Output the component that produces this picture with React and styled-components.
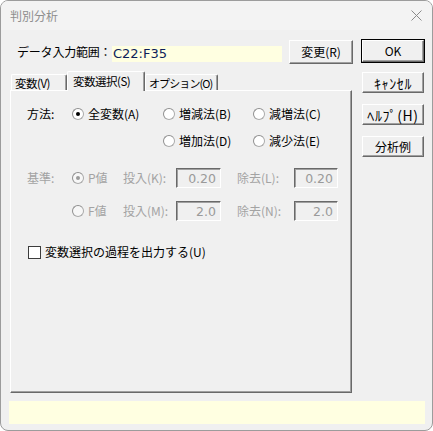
import styled, { createGlobalStyle } from "styled-components";

const face = "#f0f0f0";
const dark = "#696969";
const shadow = "#a0a0a0";
const disabledText = "#a3a3a3";

const GlobalStyle = createGlobalStyle`
  html, body { margin: 0; padding: 0; background: #ffffff; }
  * { box-sizing: border-box; }
  body {
    font-family: "Noto Sans CJK JP", "Noto Sans", sans-serif;
    font-size: 12px;
    color: #000;
  }
`;

const Window = styled.div`
  width: 433px;
  height: 431px;
  border: 1px solid #9c9c9c;
  border-radius: 8px;
  background: ${face};
  display: flex;
  flex-direction: column;
  overflow: hidden;
`;

const TitleBar = styled.div`
  height: 29px;
  background: #f3f3f3;
  display: flex;
  align-items: center;
  justify-content: space-between;
  padding: 0 10px 0 9px;
  color: #8e8e8e;
  line-height: 14px;
`;

const Main = styled.div`
  flex: 1;
  display: flex;
  padding: 9px 0 0 9px;
  gap: 9px;
`;

const LeftCol = styled.div`
  width: 342px;
  display: flex;
  flex-direction: column;
`;

const DataRow = styled.div`
  height: 26px;
  display: flex;
  align-items: center;
`;

const DataLabel = styled.span`
  width: 102px;
  padding-left: 7px;
  line-height: 14px;
  white-space: nowrap;
  letter-spacing: -0.2px;
`;

const RangeField = styled.div`
  width: 170px;
  height: 16px;
  margin-top: 3px;
  background: #ffffe1;
  color: #0e1e5a;
  font-family: "DejaVu Sans", sans-serif;
  font-size: 13px;
  line-height: 16px;
  padding-left: 1px;
`;

const Button = styled.button`
  width: ${p => p.w || 62}px;
  height: ${p => p.h || 21}px;
  margin: 0;
  padding: 0;
  background: ${face};
  border-top: 1px solid #fff;
  border-left: 1px solid #fff;
  border-right: 1px solid ${dark};
  border-bottom: 1px solid ${dark};
  box-shadow: inset -1px -1px 0 ${shadow};
  font-family: inherit;
  font-size: ${p => (p.kana ? 14 : 12)}px;
  letter-spacing: ${p => (p.kana ? 0.6 : 0)}px;
  line-height: 14px;
  color: #000;
  white-space: nowrap;
  display: flex;
  align-items: center;
  justify-content: center;
`;

const ChangeButton = styled(Button)`
  margin-left: auto;
  margin-right: -1px;
`;

const DefaultFrame = styled.div`
  width: 64px;
  height: 24px;
  border: 1px solid #000;
  display: flex;
`;

const RightCol = styled.div`
  display: flex;
  flex-direction: column;
  align-items: flex-start;
  & > button { margin-left: 1px; margin-top: 11px; }
  & > button:first-of-type { margin-top: 9px; }
`;

const TabStrip = styled.div`
  margin-top: 6px;
  height: 19px;
  display: flex;
  align-items: flex-end;
  padding-left: 1px;
  position: relative;
  z-index: 1;
`;

const Tab = styled.div`
  width: ${p => p.w}px;
  height: ${p => (p.active ? 20 : 16)}px;
  margin-bottom: ${p => (p.active ? -1 : 0)}px;
  background: ${face};
  border-top: 1px solid #fff;
  border-left: 1px solid #fff;
  border-right: 1px solid ${dark};
  box-shadow: inset -1px 0 0 ${shadow};
  border-radius: 2px 2px 0 0;
  display: flex;
  align-items: ${p => (p.active ? "flex-start" : "center")};
  padding-top: ${p => (p.active ? 2 : 0)}px;
  padding-left: ${p => (p.active ? 5 : 3)}px;
  font-size: ${p => (p.narrow ? 11 : 11.5)}px;
  letter-spacing: ${p => (p.narrow ? -0.9 : -0.5)}px;
  line-height: 14px;
  white-space: nowrap;
  overflow: hidden;
`;

const Panel = styled.div`
  width: 342px;
  height: 303px;
  border-top: 1px solid #fff;
  border-left: 1px solid #fff;
  border-right: 1px solid ${dark};
  border-bottom: 1px solid ${dark};
  box-shadow: inset -1px -1px 0 ${shadow};
  padding: 13px 0 0 16px;
  display: flex;
  flex-direction: column;
`;

const Row = styled.div`
  height: 20px;
  display: flex;
  align-items: center;
  margin-top: ${p => p.gap || 0}px;
  color: ${p => (p.disabled ? disabledText : "#000")};
`;

const Cell = styled.div`
  width: ${p => p.w}px;
  margin-left: ${p => p.ml || 0}px;
  flex: none;
  display: flex;
  align-items: center;
  line-height: 14px;
  white-space: nowrap;
`;

const RadioDot = styled.span`
  width: 12px;
  height: 12px;
  border-radius: 50%;
  border: 1px solid #ababab;
  border-top-color: #8f8f8f;
  border-left-color: #8f8f8f;
  background: ${p => (p.disabled ? "#f7f7f7" : "#fff")};
  margin-right: 4px;
  display: flex;
  align-items: center;
  justify-content: center;
  flex: none;
  &::after {
    content: "";
    width: 4px;
    height: 4px;
    border-radius: 50%;
    background: ${p => (p.checked ? (p.disabled ? "#9a9a9a" : "#000") : "transparent")};
  }
`;

const EditBox = styled.div`
  width: ${p => p.w}px;
  height: 20px;
  border-top: 1px solid ${dark};
  border-left: 1px solid ${dark};
  border-right: 1px solid #fff;
  border-bottom: 1px solid #fff;
  box-shadow: inset 1px 1px 0 ${shadow};
  background: ${face};
  color: #9a9a9a;
  font-family: "DejaVu Sans", sans-serif;
  font-size: 12.5px;
  display: flex;
  align-items: center;
  justify-content: flex-end;
  padding-right: 4px;
  flex: none;
`;

const CheckBox = styled.span`
  width: 13px;
  height: 13px;
  margin-left: 1px;
  margin-right: 4px;
  background: #fff;
  border: 1px solid #3c3c3c;
  flex: none;
`;

const StatusBar = styled.div`
  height: 23px;
  margin: 0 7px 6px 8px;
  background: #ffffe1;
`;

function Radio({ checked, disabled, children }) {
  return (
    <>
      <RadioDot checked={checked} disabled={disabled} />
      <span>{children}</span>
    </>
  );
}

function CloseIcon() {
  return (
    <svg width="11" height="11" viewBox="0 0 11 11">
      <path d="M0.5 0.5 L10.5 10.5 M10.5 0.5 L0.5 10.5" stroke="#8a8a8a" strokeWidth="1" fill="none" />
    </svg>
  );
}

export default function App() {
  return (
    <>
      <GlobalStyle />
      <Window>
        <TitleBar>
          <span>判別分析</span>
          <CloseIcon />
        </TitleBar>
        <Main>
          <LeftCol>
            <DataRow>
              <DataLabel>データ入力範囲：</DataLabel>
              <RangeField>C22:F35</RangeField>
              <ChangeButton w={64} h={24}>変更(R)</ChangeButton>
            </DataRow>
            <TabStrip>
              <Tab w={56}>変数(V)</Tab>
              <Tab w={78} active>変数選択(S)</Tab>
              <Tab w={73} narrow>オプション(O)</Tab>
            </TabStrip>
            <Panel>
              <Row>
                <Cell w={45}>方法:</Cell>
                <Cell w={91}><Radio checked>全変数(A)</Radio></Cell>
                <Cell w={90}><Radio>増減法(B)</Radio></Cell>
                <Cell w={90}><Radio>減増法(C)</Radio></Cell>
              </Row>
              <Row gap={7}>
                <Cell w={136} />
                <Cell w={90}><Radio>増加法(D)</Radio></Cell>
                <Cell w={90}><Radio>減少法(E)</Radio></Cell>
              </Row>
              <Row gap={17} disabled>
                <Cell w={45}>基準:</Cell>
                <Cell w={51}><Radio checked disabled>P値</Radio></Cell>
                <Cell w={53}>投入(K):</Cell>
                <EditBox w={45}>0.20</EditBox>
                <Cell w={57} ml={16}>除去(L):</Cell>
                <EditBox w={44}>0.20</EditBox>
              </Row>
              <Row gap={13} disabled>
                <Cell w={45} />
                <Cell w={51}><Radio disabled>F値</Radio></Cell>
                <Cell w={53}>投入(M):</Cell>
                <EditBox w={45}>2.0</EditBox>
                <Cell w={57} ml={16}>除去(N):</Cell>
                <EditBox w={44}>2.0</EditBox>
              </Row>
              <Row gap={21}>
                <CheckBox />
                <Cell w={260}>変数選択の過程を出力する(U)</Cell>
              </Row>
            </Panel>
          </LeftCol>
          <RightCol>
            <DefaultFrame>
              <Button w={62} h={22}>OK</Button>
            </DefaultFrame>
            <Button kana>ｷｬﾝｾﾙ</Button>
            <Button kana>ﾍﾙﾌﾟ(H)</Button>
            <Button>分析例</Button>
          </RightCol>
        </Main>
        <StatusBar />
      </Window>
    </>
  );
}
